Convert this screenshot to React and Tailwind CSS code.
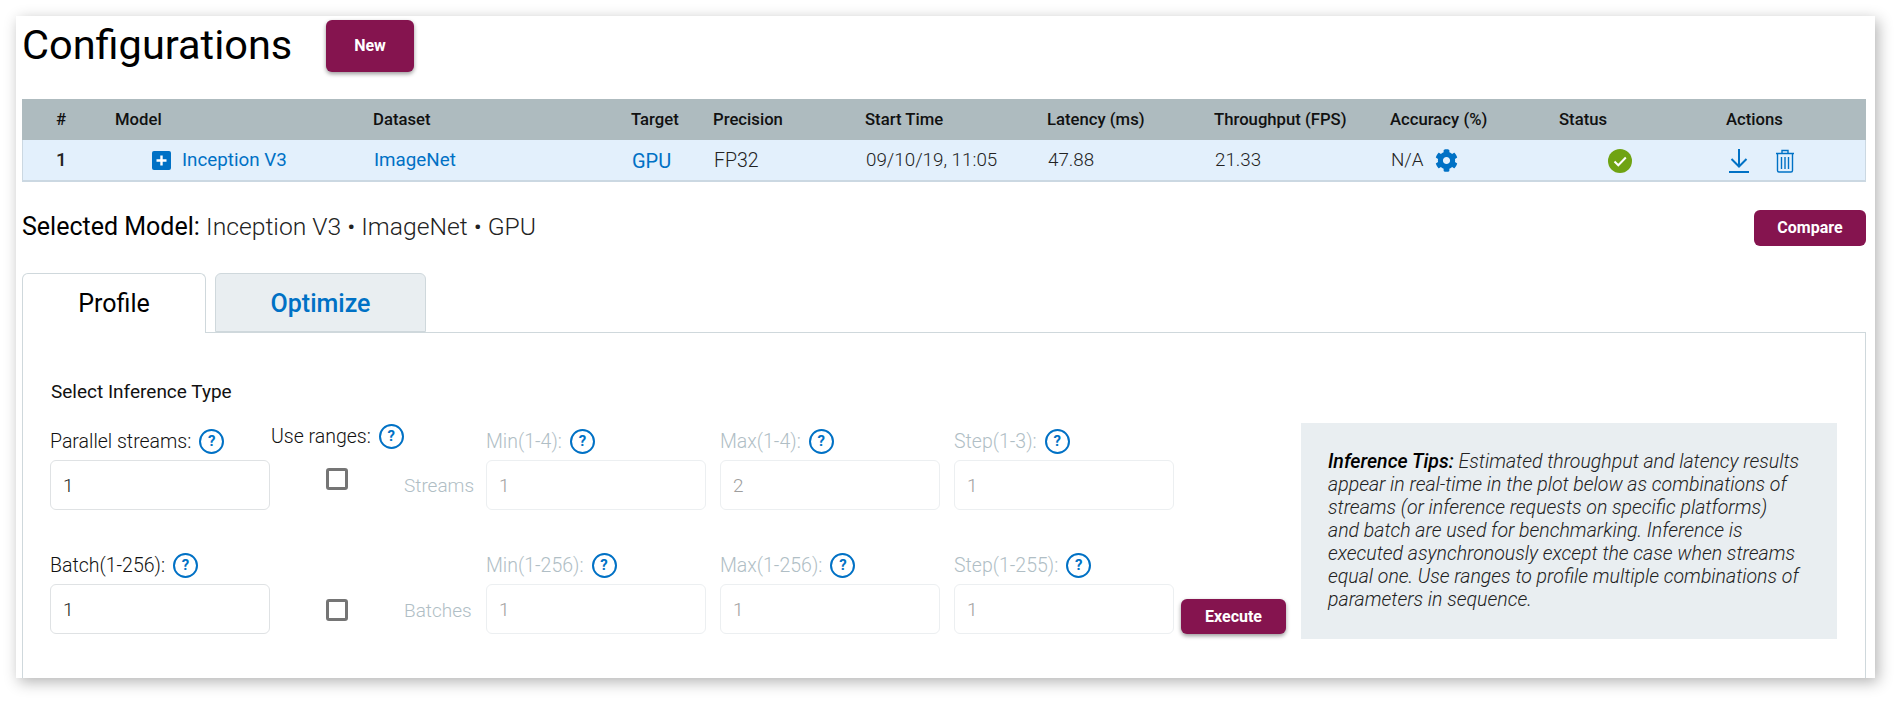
import React from 'react';
import { FaCog } from 'react-icons/fa';

const gridCols = 'grid grid-cols-[93px_258px_258px_82px_152px_182px_167px_176px_169px_167px_1fr]';

const headers = ['#', 'Model', 'Dataset', 'Target', 'Precision', 'Start Time', 'Latency (ms)', 'Throughput (FPS)', 'Accuracy (%)', 'Status', 'Actions'];

const Help = () => (
  <span className="inline-flex items-center justify-center w-[25px] h-[25px] rounded-full border-2 border-[#0071c5] text-[#0071c5] text-[15px] font-bold leading-none shrink-0">
    ?
  </span>
);

const PrimaryButton = ({ className, children }) => (
  <button type="button" className={`bg-[#85144f] text-white font-bold text-[16px] rounded-md ${className}`}>
    {children}
  </button>
);

const Field = ({ label, value, disabled, width = 'w-[220px]' }) => (
  <div className={`flex flex-col ${width}`}>
    <div className={`flex items-center gap-[8px] h-[25px] mb-[6px] text-[19.5px] font-light ${disabled ? 'text-[#b0bec5]' : 'text-[#111]'}`}>
      <span>{label}</span>
      <Help />
    </div>
    <input
      readOnly
      disabled={disabled}
      value={value}
      className={`h-[50px] w-full rounded-md border pl-[12px] text-[19px] font-light outline-none bg-white ${disabled ? 'border-[#eceff1] text-[#9e9e9e]' : 'border-[#dfe2e4] text-[#222]'}`}
    />
  </div>
);

const Checkbox = () => <span className="block w-[22px] h-[22px] rounded-[3px] border-[3px] border-[#757575]" />;

const FormRow = ({ name, first, second, third, fourth, top, ranges }) => (
  <div className={`flex items-end ${top}`}>
    <Field label={first.label} value={first.value} />
    <div className={`w-[132px] h-[50px] shrink-0 ml-[2px] relative flex items-center pl-[54px] ${ranges ? 'pb-[12px]' : 'pt-[2px]'}`}>
      <Checkbox />
      {ranges && (
        <div className="absolute -left-px -top-[38px] flex items-center gap-[8px] text-[19.5px] font-light text-[#111] whitespace-nowrap">
          Use ranges: <Help />
        </div>
      )}
    </div>
    <div className={`w-[82px] h-[50px] shrink-0 flex items-center text-[19px] font-light text-[#b0bec5] ${ranges ? 'pt-[3px]' : 'pt-[5px]'}`}>{name}</div>
    <Field disabled label={second.label} value={second.value} />
    <div className="w-[14px]" />
    <Field disabled label={third.label} value={third.value} />
    <div className="w-[14px]" />
    <Field disabled label={fourth.label} value={fourth.value} />
  </div>
);

export default function App() {
  return (
    <div className="h-[702px] overflow-hidden bg-white font-['Roboto',sans-serif]">
      <div className="ml-4 mt-4 w-[1859px] h-[662px] pl-[6px] pr-[9px] bg-white shadow-[3px_4px_14px_rgba(0,0,0,0.3)]">
        {/* Title */}
        <div className="flex pt-1 h-[56px]">
          <h1 className="w-[304px] text-[41.500px] leading-[50px] text-black">Configurations</h1>
          <PrimaryButton className="w-[88px] h-[52px] shadow-[0_2px_4px_rgba(0,0,0,0.4)]">New</PrimaryButton>
        </div>

        {/* Table */}
        <div className="mt-[27px]">
          <div className={`${gridCols} h-[41px] items-center bg-[#aebbbf] text-[16.700px] font-medium text-[#111]`}>
            {headers.map((h, i) => (
              <div key={h} className={i === 0 ? 'pl-[34px]' : ''}>{h}</div>
            ))}
          </div>
          <div className={`${gridCols} h-[42px] pt-px items-center bg-[#e3f0fc] border-b-2 border-x border-[#cbd8e2] text-[18.800px] font-light text-[#222]`}>
            <div className="pl-[33px] font-medium">1</div>
            <div className="flex items-center gap-[11px] pl-[36px] text-[#0071c5] font-normal">
              <svg width="19" height="19" viewBox="0 0 19 19">
                <rect width="19" height="19" rx="2" fill="#0071c5" />
                <path d="M9.5 4.5v10M4.5 9.5h10" stroke="#fff" strokeWidth="2.4" />
              </svg>
              Inception V3
            </div>
            <div className="text-[#0071c5] font-normal">ImageNet</div>
            <div className="text-[#0071c5] font-normal text-[20px]">GPU</div>
            <div className="text-[19.500px]">FP32</div>
            <div>09/10/19, 11:05</div>
            <div>47.88</div>
            <div>21.33</div>
            <div className="flex items-center gap-[11px]">
              N/A <FaCog className="w-[23px] h-[23px] text-[#0071c5]" />
            </div>
            <div className="pl-[48px]">
              <svg width="24" height="24" viewBox="0 0 24 24">
                <circle cx="12" cy="12" r="12" fill="#6fa312" />
                <path d="M6.5 12.500l3.800 3.800 7.500-7.800" fill="none" stroke="#fff" strokeWidth="2" />
              </svg>
            </div>
            <div className="flex items-center gap-[26px] pl-[2px]">
              <svg width="20" height="24" viewBox="0 0 20 24" fill="none" stroke="#0071c5" strokeWidth="2">
                <path d="M10 0v17M2.500 10l7.500 7.500 7.500-7.500M0 23h20" />
              </svg>
              <svg width="20" height="24" viewBox="0 0 20 24" fill="none" stroke="#0071c5" strokeWidth="1.4">
                <path d="M1 4.500h18M7 4V1.500h6V4M2.500 5v16.500a1.500 1.500 0 0 0 1.500 1.500h12a1.500 1.500 0 0 0 1.500-1.500V5M6.500 8v12M10 8v12M13.500 8v12" />
              </svg>
            </div>
          </div>
        </div>

        {/* Selected model */}
        <div className="mt-[28px] h-[36px] flex items-start justify-between">
          <div className="pt-px text-[25px] leading-[32px] text-black">
            Selected Model: <span className="text-[24.700px] font-light text-[#222]">Inception V3 • ImageNet • GPU</span>
          </div>
          <PrimaryButton className="w-[112px] h-[36px]">Compare</PrimaryButton>
        </div>

        {/* Tabs */}
        <div className="mt-[27px] flex h-[59px] items-end gap-[9px] text-[25px] relative z-10">
          <div className="w-[184px] h-[60px] -mb-px flex items-center justify-center rounded-t-md border border-b-0 border-[#cfd8dc] bg-white text-black">
            Profile
          </div>
          <div className="w-[211px] h-[59px] pt-[2px] flex items-center justify-center rounded-t-md border border-[#cfd8dc] bg-[#e9eef1] font-medium text-[#0071c5]">
            Optimize
          </div>
        </div>

        {/* Panel */}
        <div className="h-[346px] border-x border-t border-[#cfd8dc] pl-[27px] flex">
          <div className="w-[1131px]">
            <div className="mt-[47px] ml-px w-fit text-[19px] leading-[24px] text-[#111]">Select Inference Type</div>
            <FormRow
              top="mt-[25px]"
              ranges
              name="Streams"
              first={{ label: 'Parallel streams:', value: '1' }}
              second={{ label: 'Min(1-4):', value: '1' }}
              third={{ label: 'Max(1-4):', value: '2' }}
              fourth={{ label: 'Step(1-3):', value: '1' }}
            />
            <FormRow
              top="mt-[43px]"
              name="Batches"
              first={{ label: 'Batch(1-256):', value: '1' }}
              second={{ label: 'Min(1-256):', value: '1' }}
              third={{ label: 'Max(1-256):', value: '1' }}
              fourth={{ label: 'Step(1-255):', value: '1' }}
            />
          </div>
          <div className="flex flex-col justify-end h-[301px] shrink-0">
            <PrimaryButton className="w-[105px] h-[35px] shadow-[0_2px_4px_rgba(0,0,0,0.4)]">Execute</PrimaryButton>
          </div>
          <div className="ml-[15px] mt-[90px] w-[536px] h-[216px] bg-[#e9eef1] pl-[27px] pr-[25px] pt-[27px] text-[19.500px] leading-[23px] font-light italic text-[#222]">
            <span className="font-medium text-black">Inference Tips:</span> Estimated throughput and latency results appear in real-time in the plot below as combinations of streams (or inference requests on specific platforms)<br />and batch are used for benchmarking. Inference is executed asynchronously except the case when streams equal one. Use ranges to profile multiple combinations of parameters in sequence.
          </div>
        </div>
      </div>
    </div>
  );
}
